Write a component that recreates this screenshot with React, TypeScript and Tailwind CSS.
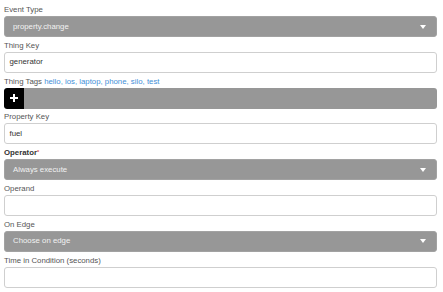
import React from "react";

const font = { fontFamily: '"Liberation Sans", Arial, sans-serif' };

function Label({ children }: { children: React.ReactNode }) {
  return (
    <div className="h-[10px] leading-[10px] text-[7.8px] text-[#555555] whitespace-nowrap">
      {children}
    </div>
  );
}

function Caret() {
  return (
    <svg width="6" height="4" viewBox="0 0 6 4" className="shrink-0">
      <path d="M0 0 L6 0 L3 4 Z" fill="#ffffff" />
    </svg>
  );
}

function Select({ value }: { value: string }) {
  return (
    <div className="mt-[1px] h-[21px] rounded-[3px] bg-[#979797] border border-[#a2a2a2] flex items-center justify-between pl-[8px] pr-[10px]">
      <span className="text-[7.8px] text-[#f2f2f2]">{value}</span>
      <Caret />
    </div>
  );
}

function Input({ value }: { value?: string }) {
  return (
    <div className="mt-[1px] h-[21px] rounded-[3px] bg-white border border-[#cfcfcf] flex items-center pl-[4.5px]">
      <span className="text-[7.8px] text-[#333]">{value ?? ""}</span>
    </div>
  );
}

function Field({ label, children }: { label: React.ReactNode; children: React.ReactNode }) {
  return (
    <div className="mb-[3.8px]">
      <Label>{label}</Label>
      {children}
    </div>
  );
}

export default function App() {
  return (
    <div className="w-[443px] h-[292px] bg-white pt-[5px] pl-[4px] pr-[6px] overflow-hidden" style={font}>
      <Field label="Event Type">
        <Select value="property.change" />
      </Field>
      <Field label="Thing Key">
        <Input value="generator" />
      </Field>
      <Field
        label={
          <>
            Thing Tags <span className="text-[#3f8fd8]">hello, ios, laptop, phone, silo, test</span>
          </>
        }
      >
        <div className="mt-[1px] h-[21px] rounded-[3px] bg-[#979797] flex items-stretch overflow-hidden">
          <div className="w-[20px] bg-black flex items-center justify-center rounded-l-[3px]">
            <svg width="8" height="8" viewBox="0 0 8 8">
              <rect x="3" y="0" width="2" height="8" fill="#fff" />
              <rect x="0" y="3" width="8" height="2" fill="#fff" />
            </svg>
          </div>
        </div>
      </Field>
      <Field label="Property Key">
        <Input value="fuel" />
      </Field>
      <Field
        label={
          <span className="font-bold text-[#333]">
            Operator<span className="text-[#d9534f] text-[5.5px] align-top relative top-[-1px]">*</span>
          </span>
        }
      >
        <Select value="Always execute" />
      </Field>
      <Field label="Operand">
        <Input />
      </Field>
      <Field label="On Edge">
        <Select value="Choose on edge" />
      </Field>
      <Field label="Time in Condition (seconds)">
        <Input />
      </Field>
    </div>
  );
}
